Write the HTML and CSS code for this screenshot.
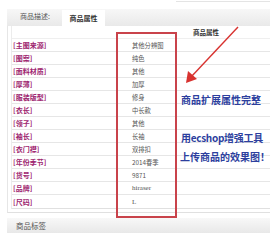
FILE: index.html
```html
<!DOCTYPE html>
<html>
<head>
<meta charset="utf-8">
<link rel="stylesheet" href="styles.css">
</head>
<body>
<div class="page">
  <div class="top"></div>
  <div class="tabs">
    <div class="tab">商品描述:</div>
    <div class="tab active">商品属性</div>
  </div>
  <div class="panel">
    <div class="table">
      <div class="head">商品属性</div>
      <div class="row"><span class="lbl">[主图来源]</span><span class="val">其他分辨图</span></div>
      <div class="row"><span class="lbl">[图案]</span><span class="val">纯色</span></div>
      <div class="row"><span class="lbl">[面料材质]</span><span class="val">其他</span></div>
      <div class="row"><span class="lbl">[厚薄]</span><span class="val">加厚</span></div>
      <div class="row"><span class="lbl">[服装版型]</span><span class="val">修身</span></div>
      <div class="row"><span class="lbl">[衣长]</span><span class="val">中长款</span></div>
      <div class="row"><span class="lbl">[领子]</span><span class="val">其他</span></div>
      <div class="row"><span class="lbl">[袖长]</span><span class="val">长袖</span></div>
      <div class="row"><span class="lbl">[衣门襟]</span><span class="val">双排扣</span></div>
      <div class="row"><span class="lbl">[年份季节]</span><span class="val">2014春季</span></div>
      <div class="row"><span class="lbl">[货号]</span><span class="val">9871</span></div>
      <div class="row"><span class="lbl">[品牌]</span><span class="val latin">hiraser</span></div>
      <div class="row"><span class="lbl">[尺码]</span><span class="val latin">L</span></div>
    </div>
  </div>
  <div class="bar">商品标签</div>

  <div class="redbox"></div>
  <svg class="arrow" width="270" height="241" viewBox="0 0 270 241">
    <line x1="238" y1="27" x2="191" y2="77" stroke="#d8322f" stroke-width="1.4"/>
    <polygon points="186,83 188,71 197,79" fill="#d8322f"/>
  </svg>
  <div class="note n1">商品扩展属性完整</div>
  <div class="note n2">用ecshop增强工具</div>
  <div class="note n3">上传商品的效果图！</div>
</div>
</body>
</html>
```

FILE: styles.css
```css
html, body {
  margin: 0;
  padding: 0;
  background: #fff;
}
.page {
  position: relative;
  width: 270px;
  height: 241px;
  overflow: hidden;
  font-family: "Noto Sans CJK SC", "Noto Sans", sans-serif;
}
.top {
  height: 1px;
  margin-left: 176px;
  border-bottom: 1px solid #e4e4e4;
}
.tabs {
  margin: 7px 0 0 7px;
  height: 17px;
  background: linear-gradient(#f7f7f7, #e9e9e9);
  display: flex;
  align-items: flex-end;
}
.tab {
  width: 42px;
  padding-left: 13px;
  height: 17px;
  line-height: 15px;
  font-size: 7px;
  color: #555;
}
.tab.active {
  width: 43px;
  padding-left: 0;
  height: 16px;
  line-height: 16px;
  background: #fff;
  text-align: center;
  font-weight: bold;
  color: #333;
}
.panel {
  margin-left: 7px;
  padding: 0 0 3px 3px;
  border-left: 1px solid #e6e6e6;
  border-bottom: 1px solid #e0e0e0;
}
.table {
  border-left: 1px solid #ececec;
  border-bottom: 1px solid #e0e0e0;
}
.head {
  height: 12px;
  line-height: 12px;
  padding-left: 181px;
  font-size: 6.5px;
  font-weight: bold;
  color: #333;
  border-bottom: 1px solid #efefef;
}
.row {
  display: grid;
  grid-template-columns: 117px 1fr;
  height: 13px;
  box-sizing: border-box;
  border-bottom: 1px solid #e6e6e6;
  align-items: center;
}
.row:last-child {
  border-bottom: none;
}
.lbl {
  padding-left: 1px;
  font-size: 7px;
  font-weight: bold;
  color: #9e2670;
}
.val {
  padding-left: 3px;
  font-size: 6.3px;
  color: #555;
}
.val.latin {
  font-family: "Liberation Serif", serif;
  font-size: 7px;
}
.bar {
  margin: 5px 0 0 7px;
  height: 15px;
  line-height: 15px;
  padding-left: 9px;
  font-size: 7.5px;
  color: #555;
  background: linear-gradient(#f8f8f8, #e8e8e8);
}
.redbox {
  position: absolute;
  left: 116px;
  top: 32px;
  width: 57px;
  height: 182px;
  border: 2px solid #c9434b;
}
.arrow {
  position: absolute;
  left: 0;
  top: 0;
}
.note {
  position: absolute;
  left: 181px;
  font-size: 10px;
  font-weight: bold;
  color: #2d3f9e;
  line-height: 12px;
  white-space: nowrap;
}
.n1 { top: 94px; }
.n2 { top: 132px; letter-spacing: -0.3px; }
.n3 { top: 151px; left: 180px; }
```
